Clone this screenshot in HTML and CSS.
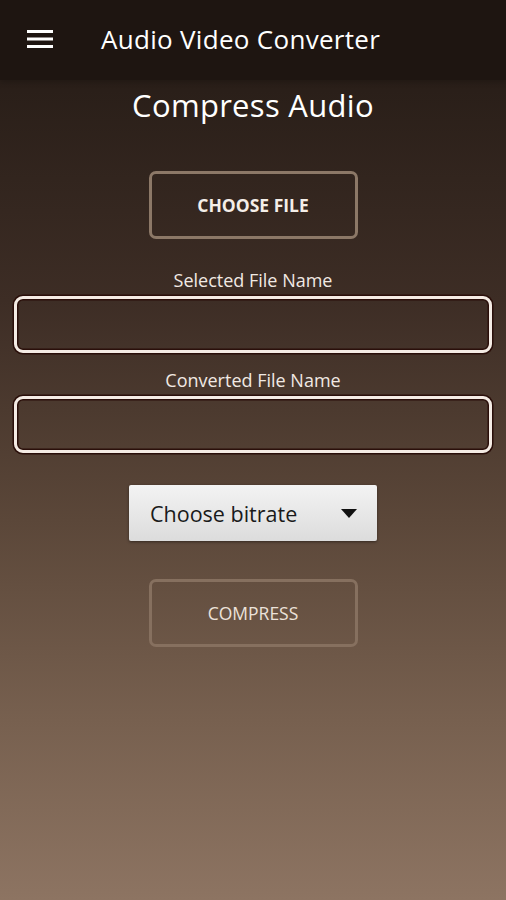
FILE: index.html
```html
<!DOCTYPE html>
<html>
<head>
<meta charset="utf-8">
<link rel="stylesheet" href="styles.css">
</head>
<body>
<div class="app">
  <header class="toolbar">
    <svg class="menu" width="26" height="20" viewBox="0 0 26 20">
      <rect x="0" y="1" width="26" height="3" fill="#fff"/>
      <rect x="0" y="8.5" width="26" height="3" fill="#fff"/>
      <rect x="0" y="16" width="26" height="3" fill="#fff"/>
    </svg>
    <span class="app-title">Audio Video Converter</span>
  </header>
  <main class="content">
    <h1 class="page-title">Compress Audio</h1>
    <button class="btn btn-choose">CHOOSE FILE</button>
    <label class="field-label">Selected File Name</label>
    <div class="field"></div>
    <label class="field-label">Converted File Name</label>
    <div class="field"></div>
    <div class="spinner">
      <span>Choose bitrate</span>
      <svg width="16" height="9" viewBox="0 0 16 9"><polygon points="0,0 16,0 8,9" fill="#111"/></svg>
    </div>
    <button class="btn btn-compress">COMPRESS</button>
  </main>
</div>
</body>
</html>
```
FILE: styles.css
```css
html, body {
  margin: 0;
  padding: 0;
  height: 100%;
}
body {
  font-family: "Open Sans", "DejaVu Sans", sans-serif;
  background: linear-gradient(to bottom, #1f1611 0px, #2a1f19 90px, #3d2d25 300px, #5b4739 520px, #77604f 720px, #8d7462 900px);
  color: #fff;
}
.app {
  width: 506px;
  height: 900px;
  display: flex;
  flex-direction: column;
}
.toolbar {
  height: 80px;
  flex: 0 0 80px;
  display: flex;
  align-items: center;
  padding-left: 27px;
  box-sizing: border-box;
  background: #1e1511;
  box-shadow: 0 2px 6px rgba(0,0,0,0.2);
}
.menu {
  display: block;
  margin-top: -2px;
}
.app-title {
  margin-left: 48px;
  font-size: 26px;
  letter-spacing: 0.3px;
  margin-top: -2px;
}
.content {
  display: flex;
  flex-direction: column;
  align-items: center;
  padding: 0 14px;
}
.page-title {
  margin: 5px 0 0;
  font-size: 31px;
  font-weight: 400;
  line-height: 40px;
  letter-spacing: 0.3px;
}
.btn {
  width: 209px;
  height: 68px;
  background: transparent;
  border: 3px solid #8c7867;
  border-radius: 7px;
  font-family: inherit;
  color: #fff;
  font-size: 17.5px;
}
.btn-choose {
  margin-top: 46px;
  font-weight: 700;
  color: #f4eee8;
}
.field-label {
  font-size: 18px;
  margin-top: 30px;
  line-height: 23px;
  color: #f1e9e3;
}
.field-label + .field {
  margin-top: 4px;
}
.field + .field-label {
  margin-top: 16px;
}
.field {
  width: 478px;
  height: 57px;
  box-sizing: border-box;
  border: 3px solid #f4ebe4;
  border-radius: 9px;
  box-shadow: 0 0 0 1.5px #2a0f0a, inset 0 0 0 1.5px #2a0f0a;
}
.spinner {
  margin-top: 32px;
  width: 248px;
  height: 56px;
  box-sizing: border-box;
  background: linear-gradient(to bottom, #f3f3f3, #dcdcdc);
  border-radius: 2px;
  box-shadow: 0 1px 3px rgba(0,0,0,0.45);
  display: flex;
  align-items: center;
  justify-content: space-between;
  padding: 0 20px 0 21px;
  color: #1a1a1a;
  font-size: 21.5px;
}
.btn-compress {
  margin-top: 38px;
  border-color: #86705f;
  color: #ece2da;
  font-weight: 400;
}
```
